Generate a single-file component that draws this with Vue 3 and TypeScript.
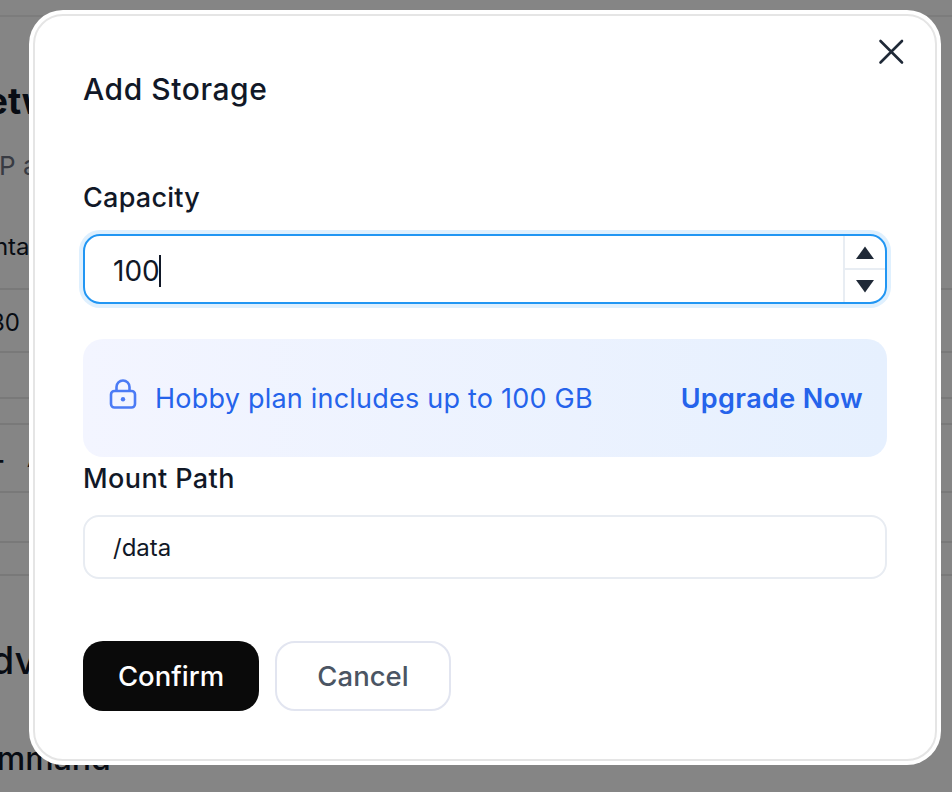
<script setup lang="ts">
const capacity = '100'
const mountPath = '/data'
</script>

<template>
  <div class="page">
    <div class="bg">
      <div class="bg-top"></div>
      <h2 class="bg-h net">Network</h2>
      <p class="bg-sub">TCP and UDP</p>
      <div class="row r-head">Container Port</div>
      <div class="row r-val">8080</div>
      <div class="row r-a"></div>
      <div class="row r-b"></div>
      <div class="row r-add"><span class="plus">+</span>Add Port</div>
      <div class="row r-c"></div>
      <div class="row r-d"></div>
      <h2 class="bg-h adv">Advanced</h2>
      <p class="bg-cmd">Command</p>
    </div>
    <div class="overlay"></div>
    <section class="modal">
      <button class="close" aria-label="Close">
        <svg width="28" height="28" viewBox="0 0 28 28" fill="none" stroke="#1f2937" stroke-width="2.6" stroke-linecap="round">
          <path d="M3.5 3L25 24.5M25 3L3.5 24.5" />
        </svg>
      </button>
      <h1 class="title">Add Storage</h1>
      <label class="label cap">Capacity</label>
      <div class="num">
        <div class="num-val">{{ capacity }}<span class="caret"></span></div>
        <div class="step">
          <div class="step-btn">
            <svg width="18" height="13" viewBox="0 0 18 13"><path d="M9 0.5L18 13H0Z" fill="#1f2937" /></svg>
          </div>
          <div class="step-btn down">
            <svg width="18" height="13" viewBox="0 0 18 13"><path d="M0 0H18L9 12.5Z" fill="#1f2937" /></svg>
          </div>
        </div>
      </div>
      <div class="banner">
        <svg class="lock" width="28" height="30" viewBox="0 0 28 30" fill="none" stroke="#4b7bf5" stroke-width="2.6">
          <rect x="2" y="12" width="24" height="16.5" rx="3.5" />
          <path d="M7.5 12V8a6.5 6.5 0 0 1 13 0v4" />
          <circle cx="14" cy="20.2" r="2.2" fill="#4b7bf5" stroke="none" />
        </svg>
        <span class="banner-text">Hobby plan includes up to 100 GB</span>
        <a class="upgrade">Upgrade Now</a>
      </div>
      <label class="label mount">Mount Path</label>
      <div class="path">{{ mountPath }}</div>
      <div class="actions">
        <button class="btn primary">Confirm</button>
        <button class="btn ghost">Cancel</button>
      </div>
    </section>
  </div>
</template>

<style>
html, body { margin: 0; background: #fff; }
</style>

<style scoped>
.page {
  position: relative;
  width: 952px;
  height: 792px;
  overflow: hidden;
  font-family: Inter, "Noto Sans", sans-serif;
  color: #111827;
}
.bg { margin-left: -36px; box-sizing: border-box; }
.bg-top { height: 15px; border-bottom: 2px solid #ededed; margin-left: 36px; }
.bg-h { margin: 0; font-size: 36px; line-height: 44px; font-weight: 700; color: #111827; }
.net { margin-top: 62px; margin-left: -5px; }
.bg-sub { margin: 26px 0 0; font-size: 26px; line-height: 34px; color: #6b7280; }
.row { box-sizing: border-box; border-bottom: 2px solid #e9e9e9; font-size: 24px; display: flex; align-items: center; width: 1024px; }
.r-head { height: 107px; padding-top: 22px; margin-left: -2px; }
.r-val { height: 63px; padding-top: 4px; margin-left: -4px; }
.r-a { height: 46px; }
.r-b { height: 26px; }
.r-add { height: 68px; }
.plus { width: 43px; flex: none; font-size: 34px; margin-left: 20px; }
.r-c { height: 50px; }
.r-d { height: 33px; }
.adv { margin-top: 62px; font-weight: 500; font-size: 38px; }
.bg-cmd { margin: 57px 0 0 -10px; font-size: 32px; line-height: 40px; font-weight: 500; }
.overlay { position: absolute; inset: 0; background: rgba(0, 0, 0, 0.48); }

.modal {
  position: absolute;
  left: 33px;
  top: 14px;
  width: 904px;
  height: 747px;
  box-sizing: border-box;
  background: #fff;
  border: 2px solid #e5e5e5;
  border-radius: 30px;
  box-shadow: 0 0 0 4px #fff;
  padding: 48px 48px 0;
  color: #111827;
}
.close {
  position: absolute;
  right: 30px;
  top: 22px;
  padding: 0;
  border: 0;
  background: none;
  display: flex;
}
.title { margin: 0; font-size: 30px; line-height: 50px; font-weight: 450; letter-spacing: 0.55px; }
.label { display: block; font-size: 27px; line-height: 36px; font-weight: 450; }
.cap { margin-top: 66px; letter-spacing: 0.25px; }
.num {
  margin-top: 18px;
  height: 70px;
  box-sizing: border-box;
  border: 2px solid #2196f3;
  border-radius: 17px;
  box-shadow: 0 0 0 4px #dff0fe;
  display: flex;
  overflow: hidden;
}
.num-val {
  flex: 1;
  padding: 3px 0 0 28px;
  font-size: 28px;
  display: flex;
  align-items: center;
}
.caret { width: 2px; height: 32px; background: #111827; margin-left: -1px; }
.step { width: 40px; border-left: 2px solid #e8edf3; display: flex; flex-direction: column; }
.step-btn { flex: 1; display: flex; align-items: center; justify-content: center; }
.step-btn.down { border-top: 2px solid #e8edf3; }
.banner {
  margin-top: 35px;
  height: 118px;
  box-sizing: border-box;
  border-radius: 20px;
  background: linear-gradient(90deg, #f3f5ff, #e6f0fe);
  padding: 0 24px 0 26px;
  display: flex;
  align-items: center;
  color: #2563eb;
  font-size: 27px;
}
.lock { flex: none; margin-top: -8px; }
.banner-text { margin-left: 18px; flex: 1; letter-spacing: 0.22px; }
.upgrade { font-weight: 600; letter-spacing: 0.36px; }
.mount { margin-top: 4px; letter-spacing: 0.4px; }
.path {
  margin-top: 18px;
  height: 64px;
  box-sizing: border-box;
  border: 2px solid #e8ecf2;
  border-radius: 16px;
  padding-left: 28px;
  display: flex;
  align-items: center;
  font-size: 24px;
}
.actions { margin-top: 62px; display: flex; gap: 16px; }
.btn {
  width: 176px;
  height: 70px;
  box-sizing: border-box;
  border-radius: 20px;
  font-family: inherit;
  font-size: 27.5px;
  font-weight: 450;
  padding: 0;
}
.primary { background: #0a0a0a; color: #fff; border: 0; }
.ghost { background: #fff; color: #4b5563; border: 2px solid #e2e5f0; }
</style>
